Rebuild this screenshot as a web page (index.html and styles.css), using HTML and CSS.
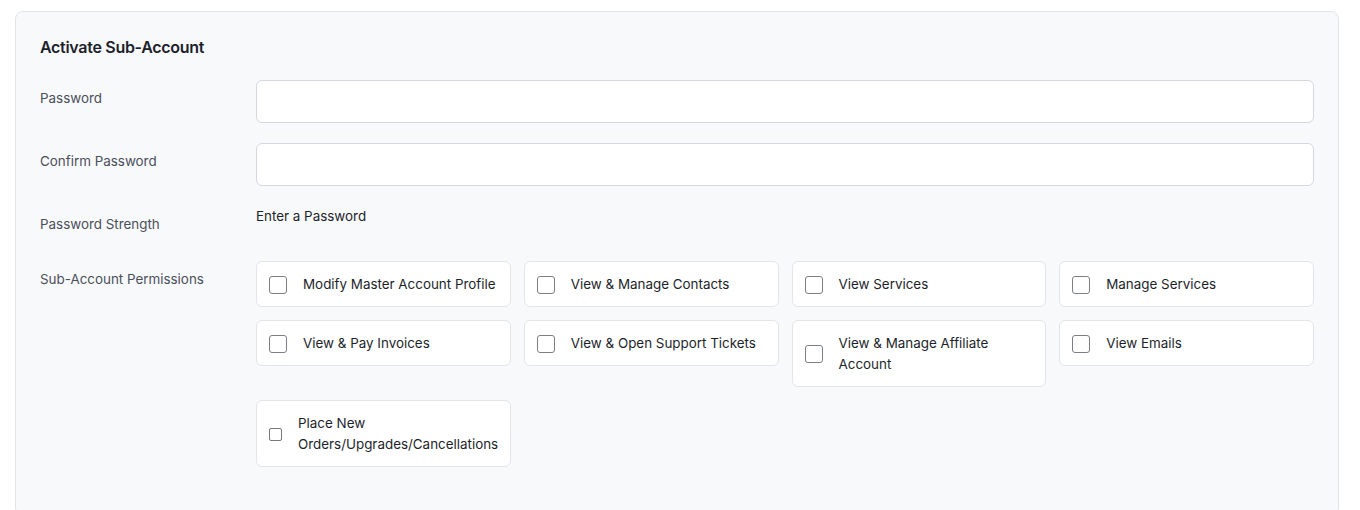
FILE: index.html
```html
<!DOCTYPE html>
<html lang="en">
<head>
  <meta charset="UTF-8">
  <meta name="viewport" content="width=device-width, initial-scale=1.0">
  <title>Activate Sub-Account</title>
  <link rel="stylesheet" href="styles.css">
</head>
<body>

<div class="card">
  <h3>Activate Sub-Account</h3>

  <form class="form">
    <label class="label" for="pw">Password</label>
    <div><input type="password" id="pw" class="field"></div>

    <label class="label" for="pw2">Confirm Password</label>
    <div><input type="password" id="pw2" class="field"></div>

    <div class="label">Password Strength</div>
    <div class="strength">Enter a Password</div>

    <div class="label">Sub-Account Permissions</div>
    <div class="perms">
      <label class="perm"><input type="checkbox" class="box"><span>Modify Master Account Profile</span></label>
      <label class="perm"><input type="checkbox" class="box"><span>View &amp; Manage Contacts</span></label>
      <label class="perm"><input type="checkbox" class="box"><span>View Services</span></label>
      <label class="perm"><input type="checkbox" class="box"><span>Manage Services</span></label>
      <label class="perm"><input type="checkbox" class="box"><span>View &amp; Pay Invoices</span></label>
      <label class="perm"><input type="checkbox" class="box"><span>View &amp; Open Support Tickets</span></label>
      <label class="perm"><input type="checkbox" class="box"><span>View &amp; Manage Affiliate Account</span></label>
      <label class="perm"><input type="checkbox" class="box"><span>View Emails</span></label>
      <label class="perm"><input type="checkbox" class="box small"><span>Place New Orders/Upgrades/Cancellations</span></label>
    </div>
  </form>
</div>

</body>
</html>
```

FILE: styles.css
```css
body {
  font-family: 'Inter', 'Noto Sans', sans-serif;
  background: #fff;
  color: #1d1f2b;
  margin: 0;
  padding: 11px 21px 0 15px;
}
.card {
  background: #f8f9fb;
  border: 1px solid #e3e5ea;
  border-radius: 8px;
  padding: 23px 24px 48px;
}
h3 {
  font-size: 16px;
  font-weight: 600;
  line-height: 24px;
  margin: 0 0 21px;
  color: #1d1f2b;
  letter-spacing: -0.3px;
}
.form {
  display: grid;
  grid-template-columns: 216px minmax(0, 1fr);
  row-gap: 20px;
  font-size: 13.4px;
  line-height: 21px;
}
.label {
  color: #4b4f5a;
  padding-top: 8px;
}
.field {
  display: block;
  width: 100%;
  box-sizing: border-box;
  height: 43px;
  border: 1px solid #d5d8de;
  border-radius: 6px;
  background: #fff;
  margin: 0;
}
.strength {
  padding-bottom: 14px;
}
.perms {
  display: grid;
  grid-template-columns: repeat(4, minmax(0, 1fr));
  gap: 13px;
  align-items: start;
}
.perm {
  display: flex;
  align-items: center;
  gap: 16px;
  background: #fff;
  border: 1px solid #e3e5ea;
  border-radius: 6px;
  padding: 12px 12px 11px;
}
.box {
  appearance: none;
  flex: none;
  width: 18px;
  height: 18px;
  margin: 0;
  border: 1.5px solid #7c7f86;
  border-radius: 3px;
  background: #fff;
}
.box.small {
  width: 13px;
  height: 13px;
  border: 1px solid #76787d;
  border-radius: 2px;
}
```
